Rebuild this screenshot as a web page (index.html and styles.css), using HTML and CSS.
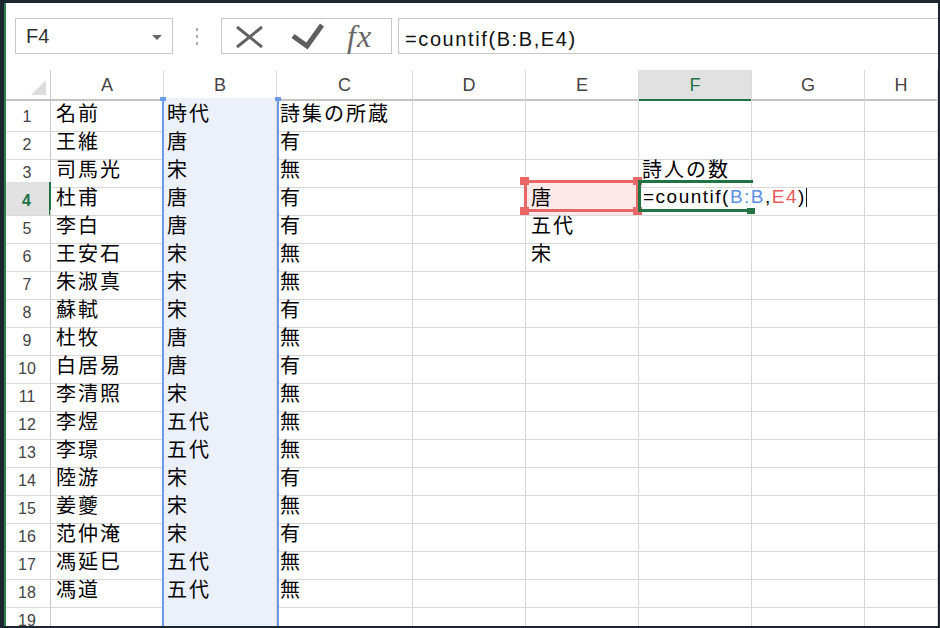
FILE: index.html
```html
<!DOCTYPE html>
<html lang="ja">
<head>
<meta charset="utf-8">
<title>countif</title>
<link rel="stylesheet" href="styles.css">
</head>
<body>
<div class="window">
  <div class="fbar">
    <div class="namebox"><span>F4</span><span class="tri"></span></div>
    <div class="dots"><i></i><i></i><i></i></div>
    <div class="icons">
      <svg width="169" height="34" viewBox="0 0 169 34">
        <path d="M15 8 L40 28 M40 8 L15 28" stroke="#626262" stroke-width="3" fill="none"/>
        <path d="M71 17 L85 27 L100 6" stroke="#5e5e5e" stroke-width="5" fill="none" stroke-linejoin="miter"/>
        <text x="125" y="28" class="fx">fx</text>
      </svg>
    </div>
    <div class="finput">=countif(B:B,E4)</div>
  </div>

  <div class="sheet">
    <div class="row hdr">
      <div class="corner"></div>
      <div class="ch">A</div><div class="ch">B</div><div class="ch">C</div><div class="ch">D</div><div class="ch">E</div><div class="ch sel">F</div><div class="ch">G</div><div class="ch">H</div>
    </div>
    <div class="row"><div class="rh">1</div><div class="c pa">名前</div><div class="c b">時代</div><div class="c">詩集の所蔵</div><div class="c"></div><div class="c"></div><div class="c"></div><div class="c"></div><div class="c"></div></div>
    <div class="row"><div class="rh">2</div><div class="c pa">王維</div><div class="c b">唐</div><div class="c">有</div><div class="c"></div><div class="c"></div><div class="c"></div><div class="c"></div><div class="c"></div></div>
    <div class="row"><div class="rh">3</div><div class="c pa">司馬光</div><div class="c b">宋</div><div class="c">無</div><div class="c"></div><div class="c"></div><div class="c">詩人の数</div><div class="c"></div><div class="c"></div></div>
    <div class="row"><div class="rh sel">4</div><div class="c pa">杜甫</div><div class="c b">唐</div><div class="c">有</div><div class="c"></div><div class="c pa e4">唐</div><div class="c f4">=countif(<span class="ref-b">B:B</span>,<span class="ref-e">E4</span>)<span class="caret"></span></div><div class="c"></div><div class="c"></div></div>
    <div class="row"><div class="rh">5</div><div class="c pa">李白</div><div class="c b">唐</div><div class="c">有</div><div class="c"></div><div class="c pa">五代</div><div class="c"></div><div class="c"></div><div class="c"></div></div>
    <div class="row"><div class="rh">6</div><div class="c pa">王安石</div><div class="c b">宋</div><div class="c">無</div><div class="c"></div><div class="c pa">宋</div><div class="c"></div><div class="c"></div><div class="c"></div></div>
    <div class="row"><div class="rh">7</div><div class="c pa">朱淑真</div><div class="c b">宋</div><div class="c">無</div><div class="c"></div><div class="c"></div><div class="c"></div><div class="c"></div><div class="c"></div></div>
    <div class="row"><div class="rh">8</div><div class="c pa">蘇軾</div><div class="c b">宋</div><div class="c">有</div><div class="c"></div><div class="c"></div><div class="c"></div><div class="c"></div><div class="c"></div></div>
    <div class="row"><div class="rh">9</div><div class="c pa">杜牧</div><div class="c b">唐</div><div class="c">無</div><div class="c"></div><div class="c"></div><div class="c"></div><div class="c"></div><div class="c"></div></div>
    <div class="row"><div class="rh">10</div><div class="c pa">白居易</div><div class="c b">唐</div><div class="c">有</div><div class="c"></div><div class="c"></div><div class="c"></div><div class="c"></div><div class="c"></div></div>
    <div class="row"><div class="rh">11</div><div class="c pa">李清照</div><div class="c b">宋</div><div class="c">無</div><div class="c"></div><div class="c"></div><div class="c"></div><div class="c"></div><div class="c"></div></div>
    <div class="row"><div class="rh">12</div><div class="c pa">李煜</div><div class="c b">五代</div><div class="c">無</div><div class="c"></div><div class="c"></div><div class="c"></div><div class="c"></div><div class="c"></div></div>
    <div class="row"><div class="rh">13</div><div class="c pa">李璟</div><div class="c b">五代</div><div class="c">無</div><div class="c"></div><div class="c"></div><div class="c"></div><div class="c"></div><div class="c"></div></div>
    <div class="row"><div class="rh">14</div><div class="c pa">陸游</div><div class="c b">宋</div><div class="c">有</div><div class="c"></div><div class="c"></div><div class="c"></div><div class="c"></div><div class="c"></div></div>
    <div class="row"><div class="rh">15</div><div class="c pa">姜夔</div><div class="c b">宋</div><div class="c">無</div><div class="c"></div><div class="c"></div><div class="c"></div><div class="c"></div><div class="c"></div></div>
    <div class="row"><div class="rh">16</div><div class="c pa">范仲淹</div><div class="c b">宋</div><div class="c">有</div><div class="c"></div><div class="c"></div><div class="c"></div><div class="c"></div><div class="c"></div></div>
    <div class="row"><div class="rh">17</div><div class="c pa">馮延巳</div><div class="c b">五代</div><div class="c">無</div><div class="c"></div><div class="c"></div><div class="c"></div><div class="c"></div><div class="c"></div></div>
    <div class="row"><div class="rh">18</div><div class="c pa">馮道</div><div class="c b">五代</div><div class="c">無</div><div class="c"></div><div class="c"></div><div class="c"></div><div class="c"></div><div class="c"></div></div>
    <div class="row"><div class="rh">19</div><div class="c pa"></div><div class="c b"></div><div class="c"></div><div class="c"></div><div class="c"></div><div class="c"></div><div class="c"></div><div class="c"></div></div>

    <div class="range-b"></div>
    <div class="range-e"><i class="h tl"></i><i class="h tr"></i><i class="h bl"></i><i class="h br"></i></div>
    <div class="active"></div>
    <div class="fill-handle"></div>
  </div>
</div>
</body>
</html>
```

FILE: styles.css
```css
* { box-sizing: border-box; }
html, body { margin: 0; padding: 0; }
body {
  width: 940px;
  height: 628px;
  overflow: hidden;
  background: #1c2630;
  font-family: "Liberation Sans", Arial, sans-serif;
}
.window {
  margin: 3px 2px 0 4px;
  height: 623px;
  background: #fff;
  border-left: 2px solid #2e7d4f;
  overflow: hidden;
}

/* formula bar */
.fbar {
  display: flex;
  height: 36px;
  margin-top: 15px;
  padding-left: 9px;
}
.namebox {
  width: 158px;
  flex: none;
  border: 1px solid #c8c8c8;
  display: flex;
  align-items: center;
  justify-content: space-between;
  padding: 0 10px;
  font-size: 20px;
  color: #333;
}
.tri {
  width: 0;
  height: 0;
  border-left: 5px solid transparent;
  border-right: 5px solid transparent;
  border-top: 5px solid #666;
  margin-top: 2px;
}
.dots {
  width: 48px;
  flex: none;
  display: flex;
  flex-direction: column;
  align-items: center;
  justify-content: center;
  gap: 4px;
}
.dots i {
  display: block;
  width: 2px;
  height: 3px;
  background: #a8a8a8;
}
.icons {
  width: 171px;
  flex: none;
  border: 1px solid #c8c8c8;
}
.icons svg { display: block; overflow: visible; }
.fx {
  font-family: "Liberation Serif", "Times New Roman", serif;
  font-style: italic;
  font-size: 32px;
  letter-spacing: 1px;
  fill: #666;
}
.finput {
  flex: 1;
  margin-left: 6px;
  margin-right: -10px;
  border: 1px solid #c8c8c8;
  border-right: none;
  padding: 5px 0 0 6px;
  font-size: 20px;
  letter-spacing: 1.6px;
  line-height: 31px;
  color: #111;
  white-space: nowrap;
}

/* sheet */
.sheet {
  position: relative;
  margin-top: 16px;
}
.row {
  display: grid;
  grid-template-columns: 45px 113px 113px 136px 113px 113px 113px 113px 1fr;
  height: 28px;
}
.corner {
  position: relative;
  border-right: 1px solid #c8c8c8;
  border-bottom: 2px solid #c4c4c4;
}
.corner::after {
  content: "";
  position: absolute;
  right: 4px;
  bottom: 4px;
  width: 0;
  height: 0;
  border-left: 15px solid transparent;
  border-bottom: 15px solid #dcdcdc;
}
.ch {
  border-right: 1px solid #dadada;
  border-bottom: 2px solid #c4c4c4;
  text-align: center;
  font-size: 18px;
  line-height: 27px;
  padding-top: 2px;
  color: #444;
}
.ch.sel {
  background: #e1e1e1;
  border-bottom-color: #217346;
  color: #217346;
}
.rh {
  border-right: 1px solid #c8c8c8;
  border-bottom: 1px solid #dadada;
  text-align: center;
  font-size: 16px;
  line-height: 29px;
  padding-top: 4px;
  color: #444;
  padding-right: 2px;
}
.rh.sel {
  background: #e1e1e1;
  border-right: 2px solid #217346;
  color: #217346;
  font-weight: bold;
}
.c {
  border-right: 1px solid #d8d8d8;
  border-bottom: 1px solid #d8d8d8;
  font-family: "Noto Sans CJK JP", "Noto Sans CJK SC", sans-serif;
  font-size: 20px;
  letter-spacing: 2px;
  line-height: 29px;
  padding-left: 3px;
  white-space: nowrap;
  color: #000;
}
.c.pa { padding-left: 5px; }
.c.b {
  background: #ebf0fa;
  border-bottom-color: #d2d8e4;
}
.c.e4 { background: #fde9e9; }
.c.f4 {
  border-right: none;
  overflow: visible;
  font-family: "Liberation Sans", Arial, sans-serif;
  font-size: 19px;
  letter-spacing: 1.5px;
  padding-left: 4px;
  position: relative;
  z-index: 1;
}
.ref-b { color: #5b8fe8; }
.ref-e { color: #e85c5c; }
.caret {
  display: inline-block;
  width: 1px;
  height: 19px;
  background: #111;
  vertical-align: -4px;
}

/* overlays */
.range-b {
  position: absolute;
  left: 156px;
  top: 27px;
  width: 117px;
  height: 600px;
  border-left: 2px solid #6b9be8;
  border-right: 2px solid #6b9be8;
  pointer-events: none;
}
.range-b::before,
.range-b::after {
  content: "";
  position: absolute;
  top: 0;
  width: 6px;
  height: 4px;
  background: #6b9be8;
}
.range-b::before { left: -4px; }
.range-b::after { right: -4px; }

.range-e {
  position: absolute;
  left: 518px;
  top: 110px;
  width: 115px;
  height: 32px;
  border: 3px solid #e86666;
}
.range-e .h {
  position: absolute;
  width: 9px;
  height: 8px;
  background: #e86666;
}
.h.tl { left: -7px; top: -6px; }
.h.tr { right: -6px; top: -6px; }
.h.bl { left: -7px; bottom: -6px; }
.h.br { right: -6px; bottom: -6px; }

.active {
  position: absolute;
  left: 632px;
  top: 110px;
  width: 115px;
  height: 32px;
  border: 3px solid #217346;
  border-right: none;
  z-index: 2;
}
.fill-handle {
  position: absolute;
  left: 741px;
  top: 138px;
  width: 8px;
  height: 6px;
  background: #217346;
  z-index: 2;
}
```
